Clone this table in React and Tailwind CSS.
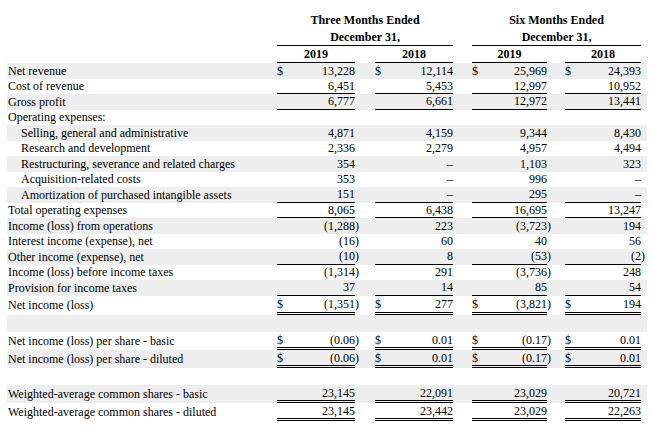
import React from "react";

const cols = [
    { w: "w-[78px]", gap: "" },
    { w: "w-[78px]", gap: "ml-[20px]" },
    { w: "w-[75px]", gap: "ml-[19px]" },
    { w: "w-[76px]", gap: "ml-[18px]" },
];

// linhas da demonstração (valores em milhares)
const rows = [
    { label: "Net revenue", v: ["13,228", "12,114", "25,969", "24,393"], dollar: true },
    { label: "Cost of revenue", v: ["6,451", "5,453", "12,997", "10,952"], line: "single" },
    { label: "Gross profit", v: ["6,777", "6,661", "12,972", "13,441"], line: "single" },
    { label: "Operating expenses:", v: ["", "", "", ""] },
    { label: "Selling, general and administrative", indent: true, v: ["4,871", "4,159", "9,344", "8,430"] },
    { label: "Research and development", indent: true, v: ["2,336", "2,279", "4,957", "4,494"] },
    { label: "Restructuring, severance and related charges", indent: true, v: ["354", "–", "1,103", "323"] },
    { label: "Acquisition-related costs", indent: true, v: ["353", "–", "996", "–"] },
    { label: "Amortization of purchased intangible assets", indent: true, v: ["151", "–", "295", "–"], line: "single" },
    { label: "Total operating expenses", v: ["8,065", "6,438", "16,695", "13,247"], line: "single" },
    { label: "Income (loss) from operations", v: ["(1,288)", "223", "(3,723)", "194"] },
    { label: "Interest income (expense), net", v: ["(16)", "60", "40", "56"] },
    { label: "Other income (expense), net", v: ["(10)", "8", "(53)", "(2)"], line: "single" },
    { label: "Income (loss) before income taxes", v: ["(1,314)", "291", "(3,736)", "248"] },
    { label: "Provision for income taxes", v: ["37", "14", "85", "54"], line: "single" },
    { label: "Net income (loss)", v: ["(1,351)", "277", "(3,821)", "194"], dollar: true, line: "double", h: "h-[19.5px]" },
    { blank: true, h: "h-[17px]" },
    { label: "Net income (loss) per share - basic", v: ["(0.06)", "0.01", "(0.17)", "0.01"], dollar: true, line: "double", h: "h-[18px]" },
    { label: "Net income (loss) per share - diluted", v: ["(0.06)", "0.01", "(0.17)", "0.01"], dollar: true, line: "double", h: "h-[18px]" },
    { blank: true, h: "h-[17px]" },
    { label: "Weighted-average common shares - basic", v: ["23,145", "22,091", "23,029", "20,721"], line: "double", h: "h-[18px]" },
    { label: "Weighted-average common shares - diluted", v: ["23,145", "23,442", "23,029", "22,263"], line: "double", h: "h-[18px]" },
];

const Valor = ({ v }) => {
    if (v.endsWith(")")) {
        return (
            <span className="whitespace-nowrap">
                {v.slice(0, -1)}
                <span className="inline-block w-0">)</span>
            </span>
        );
    }
    return <span className="whitespace-nowrap">{v}</span>;
};

const Linha = ({ row, shade }) => {
    const h = row.h || "h-[15.5px]";
    const bg = shade ? "bg-[#eeeeee]" : "";
    if (row.blank) {
        return <div className={`${h} ${bg} w-[640px]`} />;
    }
    const borda =
        row.line === "single"
            ? "border-b border-black"
            : row.line === "double"
            ? "border-b-[3px] border-double border-black"
            : "";
    return (
        <div className={`flex w-[640px] ${h} ${bg}`}>
            <div className={`flex w-[270px] shrink-0 items-center whitespace-nowrap ${row.indent ? "pl-[14px]" : "pl-px"}`}>
                {row.label}
            </div>
            {cols.map((c, i) => (
                <div
                    key={i}
                    className={`flex shrink-0 items-center justify-between ${c.w} ${c.gap} ${row.v[i] ? borda : ""}`}
                >
                    <span>{row.dollar ? "$" : ""}</span>
                    <Valor v={row.v[i]} />
                </div>
            ))}
        </div>
    );
};

const App = () => {
    return (
        <div className="min-h-screen bg-white pl-[7px] pt-[12px] font-['Liberation_Serif',serif] text-[12px] leading-[14px] text-black">
            {/* cabeçalho */}
            <div className="flex w-[640px] font-bold">
                <div className="w-[270px] shrink-0" />
                <div className="w-[176px] shrink-0">
                    <div className="flex h-[16px] items-center justify-center">Three Months Ended</div>
                    <div className="flex h-[18px] items-center justify-center border-b border-black">December 31,</div>
                </div>
                <div className="ml-[19px] w-[169px] shrink-0">
                    <div className="flex h-[16px] items-center justify-center">Six Months Ended</div>
                    <div className="flex h-[18px] items-center justify-center border-b border-black">December 31,</div>
                </div>
            </div>
            <div className="flex h-[17px] w-[640px] font-bold">
                <div className="w-[270px] shrink-0" />
                {["2019", "2018", "2019", "2018"].map((y, i) => (
                    <div
                        key={i}
                        className={`flex shrink-0 items-center justify-center border-b border-black ${cols[i].w} ${cols[i].gap}`}
                    >
                        {y}
                    </div>
                ))}
            </div>
            {/* corpo */}
            {rows.map((row, i) => (
                <Linha key={i} row={row} shade={i % 2 === 0} />
            ))}
        </div>
    );
};

export default App;
